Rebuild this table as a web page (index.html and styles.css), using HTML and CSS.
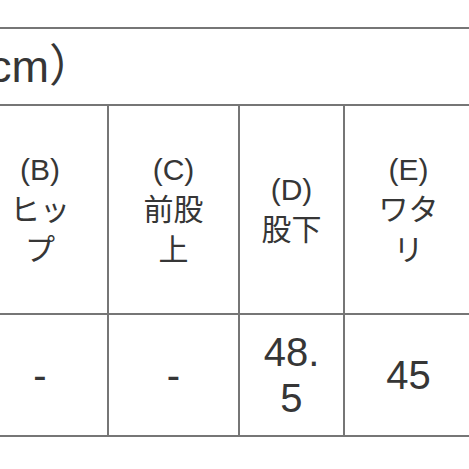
FILE: index.html
```html
<!DOCTYPE html>
<html lang="ja">
<head>
<meta charset="utf-8">
<title>サイズ表</title>
<link rel="stylesheet" href="styles.css">
</head>
<body>
<div class="page">
  <div class="size-table">
    <div class="cell caption"><span class="cap-pre"><span>サイズ（</span></span>cm）</div>
    <div class="cell head">(B)<br>ヒッ<br>プ</div>
    <div class="cell head">(C)<br>前股<br>上</div>
    <div class="cell head">(D)<br>股下</div>
    <div class="cell head">(E)<br>ワタ<br>リ</div>
    <div class="cell data">-</div>
    <div class="cell data">-</div>
    <div class="cell data">48.<br>5</div>
    <div class="cell data">45</div>
  </div>
</div>
</body>
</html>
```

FILE: styles.css
```css
html, body {
  margin: 0;
  padding: 0;
  background: #ffffff;
  overflow: hidden;
}

.page {
  width: 469px;
  height: 469px;
  overflow: hidden;
  padding-top: 27px;
  box-sizing: border-box;
}

.size-table {
  display: grid;
  grid-template-columns: 134px 129px 103px 127px;
  grid-template-rows: 75px 207px 120px;
  gap: 2px;
  padding: 2px;
  background: #767676;
  margin-left: -29px;
  width: max-content;
  font-family: "Liberation Sans", "Noto Sans CJK JP", sans-serif;
  color: #363636;
}

.cell {
  background: #ffffff;
  display: flex;
  align-items: center;
  justify-content: center;
  text-align: center;
}

.caption {
  grid-column: 1 / -1;
  justify-content: flex-start;
  font-size: 45px;
  line-height: 1;
  white-space: nowrap;
}

.cap-pre {
  display: inline-flex;
  justify-content: flex-end;
  width: 16px;
  overflow: hidden;
}

.cap-pre span {
  flex: none;
}

.head {
  font-size: 30px;
  line-height: 40px;
}

.data {
  font-size: 40px;
  line-height: 46px;
}
```
